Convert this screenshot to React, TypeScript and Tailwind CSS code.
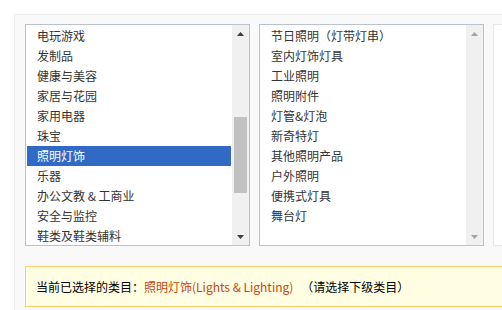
import React from "react";

const left = [
  "电玩游戏",
  "发制品",
  "健康与美容",
  "家居与花园",
  "家用电器",
  "珠宝",
  "照明灯饰",
  "乐器",
  "办公文教 & 工商业",
  "安全与监控",
  "鞋类及鞋类辅料",
];
const right = [
  "节日照明（灯带灯串）",
  "室内灯饰灯具",
  "工业照明",
  "照明附件",
  "灯管&灯泡",
  "新奇特灯",
  "其他照明产品",
  "户外照明",
  "便携式灯具",
  "舞台灯",
];

function Arrow({ up, color }: { up: boolean; color: string }) {
  return (
    <svg width="7" height="4" viewBox="0 0 7 4" className="block">
      {up ? (
        <polygon points="0,4 7,4 3.5,0" fill={color} />
      ) : (
        <polygon points="0,0 7,0 3.5,4" fill={color} />
      )}
    </svg>
  );
}

function ListBox({
  items,
  selected,
  active,
}: {
  items: string[];
  selected?: number;
  active: boolean;
}) {
  const arrowColor = active ? "#3c3c3c" : "#a3a3a3";
  return (
    <div className="flex h-[222px] w-[225px] shrink-0 border border-[#b9c3d0] bg-white">
      <div className="flex-1 overflow-hidden p-px">
        {items.map((t, i) => (
          <div
            key={t}
            className={
              i === selected
                ? "h-5 pl-[10px] leading-5 bg-[#316ac5] text-white whitespace-nowrap"
                : "h-5 pl-[10px] leading-5 text-[#333] whitespace-nowrap"
            }
          >
            {t}
          </div>
        ))}
      </div>
      <div className="flex w-[17px] shrink-0 flex-col bg-[#f0f0f0]">
        <div className="flex h-[17px] items-center justify-center">
          <Arrow up color={arrowColor} />
        </div>
        <div className="flex-1 px-[2px]">
          {active && <div className="mt-[75px] h-[76px] bg-[#c1c1c1]" />}
        </div>
        <div className="flex h-[17px] items-center justify-center">
          <Arrow up={false} color={arrowColor} />
        </div>
      </div>
    </div>
  );
}

export default function App() {
  return (
    <div
      className="h-[310px] w-[502px] overflow-hidden bg-white text-[12px]"
      style={{ fontFamily: '"Noto Sans CJK SC", "Noto Sans", sans-serif' }}
    >
      <div className="ml-[14px] mt-[14px] h-[320px] w-[520px] border border-[#ececec] bg-[#f9f9f9] pl-[10px] pt-[9px]">
        <div className="flex gap-[9px]">
          <ListBox items={left} selected={6} active />
          <ListBox items={right} active={false} />
          <div className="h-[222px] w-[225px] shrink-0 border border-[#e6e6e6] bg-white" />
        </div>
        <div className="mt-[20px] flex h-[41px] items-center border border-[#ffcc70] bg-[#fffde2] pl-[10px] text-black">
          <span>当前已选择的类目：</span>
          <span className="text-[#c7470c]">照明灯饰(Lights &amp; Lighting)</span>
          <span className="ml-[8px]">（请选择下级类目）</span>
        </div>
      </div>
    </div>
  );
}
